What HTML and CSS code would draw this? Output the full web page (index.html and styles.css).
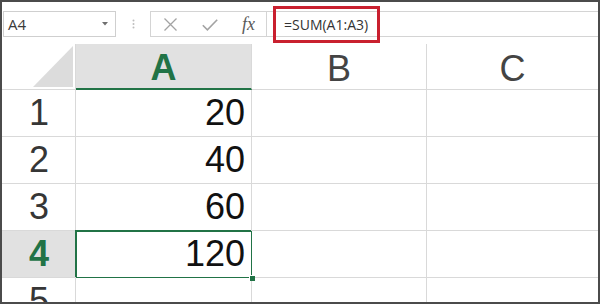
FILE: index.html
```html
<!DOCTYPE html>
<html>
<head>
<meta charset="utf-8">
<link rel="stylesheet" href="styles.css">
</head>
<body>
<div class="frame">
  <div class="toolbar">
    <div class="namebox">
      <span class="ref">A4</span>
      <svg class="caret" width="6" height="4" viewBox="0 0 6 4"><polygon points="0,0 6,0 3,3.5" fill="#6f6f6f"/></svg>
    </div>
    <div class="grip">
      <svg width="3" height="10" viewBox="0 0 3 10"><circle cx="1.5" cy="1.5" r="1" fill="#bdbdbd"/><circle cx="1.5" cy="5" r="1" fill="#bdbdbd"/><circle cx="1.5" cy="8.5" r="1" fill="#bdbdbd"/></svg>
    </div>
    <div class="fbtns">
      <svg class="ic-x" width="13" height="13" viewBox="0 0 13 13"><path d="M0.5 0.5 L12.5 12.5 M12.5 0.5 L0.5 12.5" stroke="#a3a3a3" stroke-width="1.3" fill="none"/></svg>
      <svg class="ic-ok" width="16" height="12" viewBox="0 0 16 12"><path d="M0.8 6.2 L5.4 10.8 L15.2 0.8" stroke="#a3a3a3" stroke-width="1.6" fill="none"/></svg>
      <span class="fx">fx</span>
    </div>
    <div class="finput">
      <span class="formula">=SUM(A1:A3)</span>
    </div>
  </div>
  <div class="sheet">
    <div class="corner"><svg width="40" height="41" viewBox="0 0 40 41"><polygon points="40,0 40,41 0,41" fill="#dcdcdc"/></svg></div>
    <div class="colh active">A</div>
    <div class="colh">B</div>
    <div class="colh last">C</div>

    <div class="rowh">1</div>
    <div class="cell num">20</div>
    <div class="cell"></div>
    <div class="cell last"></div>

    <div class="rowh">2</div>
    <div class="cell num">40</div>
    <div class="cell"></div>
    <div class="cell last"></div>

    <div class="rowh">3</div>
    <div class="cell num">60</div>
    <div class="cell"></div>
    <div class="cell last"></div>

    <div class="rowh active">4</div>
    <div class="cell num sel">120</div>
    <div class="cell"></div>
    <div class="cell last"></div>

    <div class="rowh">5</div>
    <div class="cell"></div>
    <div class="cell"></div>
    <div class="cell last"></div>
  </div>
</div>
</body>
</html>
```

FILE: styles.css
```css
html, body {
  margin: 0;
  padding: 0;
  background: #ffffff;
}

.frame {
  width: 600px;
  height: 304px;
  box-sizing: border-box;
  border: 2px solid #4b4b4b;
  overflow: hidden;
  background: #ffffff;
  font-family: "Liberation Sans", Arial, sans-serif;
}

/* ---------- toolbar ---------- */
.toolbar {
  height: 42px;
  box-sizing: border-box;
  padding-top: 9px;
  display: flex;
  align-items: flex-start;
}

.namebox {
  margin-left: 1px;
  width: 113px;
  height: 26px;
  box-sizing: border-box;
  border: 1px solid #cfcfcf;
  display: flex;
  align-items: center;
  justify-content: space-between;
  padding: 0 7px 0 4px;
}

.ref {
  font-family: "Open Sans", "Liberation Sans", sans-serif;
  font-size: 15px;
  color: #3a3a3a;
  line-height: 1;
}

.caret {
  display: block;
}

.grip {
  width: 34px;
  height: 26px;
  display: flex;
  align-items: center;
  justify-content: center;
}

.grip svg {
  display: block;
}

.fbtns {
  width: 117px;
  height: 26px;
  box-sizing: border-box;
  border: 1px solid #d4d4d4;
  display: flex;
  align-items: center;
  padding-left: 13px;
}

.ic-x {
  display: block;
  margin-top: 1px;
}

.ic-ok {
  display: block;
  margin-left: 25px;
  margin-top: 1px;
}

.fx {
  margin-left: 24px;
  font-family: "Liberation Serif", "Times New Roman", serif;
  font-style: italic;
  font-size: 18px;
  color: #5a5a5a;
  line-height: 1;
}

.finput {
  flex: 1;
  height: 26px;
  box-sizing: border-box;
  border-top: 1px solid #d4d4d4;
  border-bottom: 1px solid #d4d4d4;
  display: flex;
  align-items: center;
}

.formula {
  margin-left: 6px;
  width: 107px;
  height: 37px;
  flex: none;
  box-sizing: border-box;
  border: 3px solid #c9202f;
  display: flex;
  align-items: center;
  padding-left: 8px;
  font-family: "Open Sans", "Liberation Sans", sans-serif;
  font-size: 14px;
  color: #333333;
  white-space: nowrap;
}

/* ---------- sheet ---------- */
.sheet {
  display: grid;
  grid-template-columns: 74px 176px 175px 1fr;
  grid-template-rows: 46px repeat(5, 47px);
}

.sheet > div {
  box-sizing: border-box;
  border-right: 1px solid #d9d9d9;
  border-bottom: 1px solid #d9d9d9;
}

.sheet > div.last {
  border-right: none;
}

.corner {
  display: flex;
  justify-content: flex-end;
  align-items: flex-end;
  padding: 0 2px 2px 0;
}

.corner svg {
  display: block;
}

.colh {
  display: flex;
  align-items: center;
  justify-content: center;
  padding-top: 4px;
  font-size: 36px;
  color: #444444;
  line-height: 1;
}

.colh.active {
  background: #e1e1e1;
  color: #217346;
  font-weight: bold;
  border-bottom: 2px solid #217346 !important;
}

.rowh {
  display: flex;
  align-items: center;
  justify-content: center;
  padding-left: 1px;
  font-size: 36px;
  color: #363636;
  line-height: 1;
}

.rowh.active {
  background: #e1e1e1;
  color: #217346;
  font-weight: bold;
}

.cell {
  display: flex;
  align-items: center;
  justify-content: flex-end;
  font-size: 36px;
  color: #111111;
  line-height: 1;
}

.cell.num {
  padding-right: 6px;
}

.cell.sel {
  position: relative;
  border-right: 1px solid #217346 !important;
  border-bottom: 1px solid #217346 !important;
  box-shadow: -1px -1px 0 0 #217346, inset 1px 1px 0 0 #217346;
}

.cell.sel::after {
  content: "";
  position: absolute;
  right: -4px;
  bottom: -4px;
  width: 5px;
  height: 5px;
  background: #217346;
  border: 1px solid #ffffff;
  border-right: none;
  border-bottom: none;
}
```
